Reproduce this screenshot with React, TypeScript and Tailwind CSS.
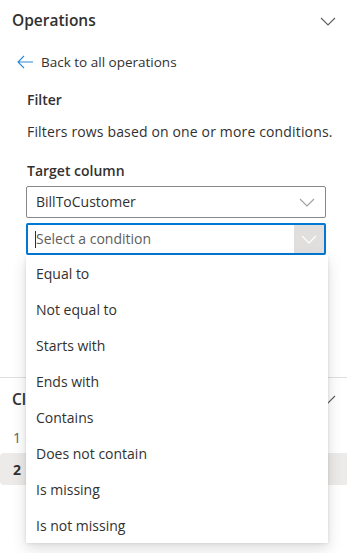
import React from "react";

function Chevron({ className = "", color = "#605e5c" }: { className?: string; color?: string }) {
  return (
    <svg width="16" height="9" viewBox="0 0 16 9" className={className} fill="none">
      <polyline points="1,1 8,8 15,1" stroke={color} strokeWidth="1.1" />
    </svg>
  );
}

export default function App() {
  const items = [
    "Equal to",
    "Not equal to",
    "Starts with",
    "Ends with",
    "Contains",
    "Does not contain",
    "Is missing",
    "Is not missing",
  ];
  return (
    <div className="relative w-[347px] h-[553px] overflow-hidden bg-white text-[#323130] font-['Open_Sans',sans-serif]">
      {/* Operations header */}
      <div className="h-[42px] flex items-center justify-between pl-3 pr-[11px]">
        <span className="text-[15.5px] font-semibold leading-none">Operations</span>
        <Chevron color="#605e5c" />
      </div>
      {/* Back */}
      <div className="mt-1 h-8 flex items-center pl-[17px] gap-2">
        <svg width="16" height="14" viewBox="0 0 16 14" fill="none">
          <path d="M16 7H1M7 1L1 7L7 13" stroke="#2b88d8" strokeWidth="1.1" />
        </svg>
        <span className="text-[13.5px] leading-5 text-[#323130]">Back to all operations</span>
      </div>
      <div className="pl-[27px] pr-[10px]">
        <div className="mt-3 text-[14px] leading-5 font-semibold">Filter</div>
        <div className="mt-3 text-[14px] leading-5 whitespace-nowrap tracking-[0.15px]">Filters rows based on one or more conditions.</div>
        <div className="mt-[19px] text-[14px] leading-5 font-semibold">Target column</div>
      </div>
      <div className="pl-[26px]">
        <div className="mt-[5px] w-[300px] h-8 border border-[#8a8886] rounded-[2px] flex items-center justify-between pl-[9px] pr-[10px]">
          <span className="text-[14px] leading-5">BillToCustomer</span>
          <Chevron color="#a19f9d" />
        </div>
        <div className="mt-[5px] w-[300px] h-8 border-2 border-[#0078d4] rounded-[2px] flex items-center">
          <div className="flex-1 flex items-center pl-[7px]">
            <span className="w-px h-[17px] bg-[#323130]" />
            <span className="text-[14px] leading-5 text-[#605e5c]">Select a condition</span>
          </div>
          <div className="w-[30px] h-full bg-[#e1dfdd] flex items-center justify-center">
            <Chevron color="#ffffff" />
          </div>
        </div>
      </div>
      {/* Next section, partly behind the dropdown */}
      <div className="mt-[122px] border-t border-[#e1dfdd]">
        <div className="h-[43px] flex items-center justify-between pl-3 pr-[11px]">
          <span className="text-[15.5px] font-semibold leading-none">Cl</span>
          <Chevron color="#605e5c" />
        </div>
        <div className="h-8 flex items-center pl-[13px] text-[14px] text-[#605e5c]">1</div>
        <div className="h-8 flex items-center pl-[13px] text-[14px] font-bold bg-[#edebe9] rounded-l-[4px]">2</div>
      </div>
      {/* Dropdown */}
      <div className="absolute left-[26px] top-[255px] w-[302px] bg-white shadow-[0_6.4px_14.4px_0_rgba(0,0,0,0.132),0_1.2px_3.6px_0_rgba(0,0,0,0.108)] flex flex-col">
        {items.map((it) => (
          <div key={it} className="h-9 flex items-center pl-[10px] text-[14px] text-[#323130]">
            {it}
          </div>
        ))}
      </div>
    </div>
  );
}
